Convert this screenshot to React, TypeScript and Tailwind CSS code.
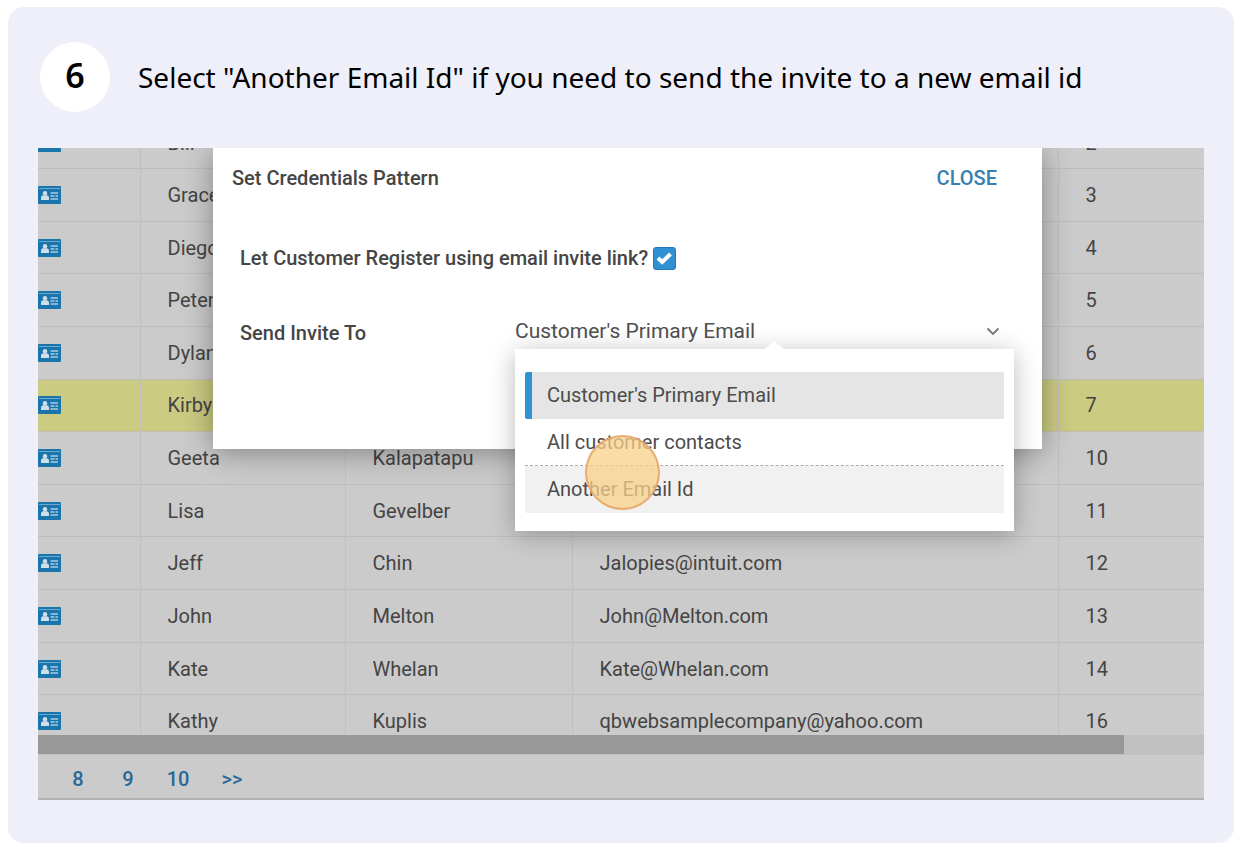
import { useState } from "react";

type Contact = { first: string; last?: string; email?: string; no: number; active?: boolean };

const contacts: Contact[] = [
  { first: "Bill", no: 2 },
  { first: "Grace", no: 3 },
  { first: "Diego", no: 4 },
  { first: "Peter", no: 5 },
  { first: "Dylan", no: 6 },
  { first: "Kirby", no: 7, active: true },
  { first: "Geeta", last: "Kalapatapu", no: 10 },
  { first: "Lisa", last: "Gevelber", no: 11 },
  { first: "Jeff", last: "Chin", email: "Jalopies@intuit.com", no: 12 },
  { first: "John", last: "Melton", email: "John@Melton.com", no: 13 },
  { first: "Kate", last: "Whelan", email: "Kate@Whelan.com", no: 14 },
  { first: "Kathy", last: "Kuplis", email: "qbwebsamplecompany@yahoo.com", no: 16 },
];

const options = ["Customer's Primary Email", "All customer contacts", "Another Email Id"];

function CardIcon() {
  return (
    <svg width="23" height="18" viewBox="0 0 23 18" aria-hidden="true" className="block">
      <rect width="23" height="18" rx="1" fill="#1a75ad" />
      <rect x="1" y="2" width="21" height="1" fill="#6fa8ca" />
      <circle cx="7" cy="7.200" r="2.200" fill="#cfe0ea" />
      <path d="M3 14v-2q0-2.500 2-2.800h4q2 .3 2 2.800v2z" fill="#cfe0ea" />
      <path d="M12.500 7H20M12.500 10h4M17.500 10H20M12.500 13H20" stroke="#a9cbe0" strokeWidth="1.400" />
    </svg>
  );
}

function ContactTable() {
  return (
    <div className="h-[587px] overflow-hidden">
      <table className="-mt-[31px] h-[631px] w-full table-fixed border-collapse text-left text-[20px] leading-6 text-[#444]">
        <colgroup>
          <col className="w-[102px]" />
          <col className="w-[205px]" />
          <col className="w-[227px]" />
          <col />
          <col className="w-[146px]" />
        </colgroup>
        <tbody>
          {contacts.map((c) => (
            <tr key={c.no} className={c.active ? "border-b border-[#c0c0b0] bg-[#cccb82]" : "border-b border-[#bdbdbd]"}>
              <td className="border-r border-[#c0c0c0]">
                <button type="button" aria-label={`Open card of ${c.first}`} className="block">
                  <CardIcon />
                </button>
              </td>
              <td className="border-r border-[#c0c0c0] pl-[27px]">{c.first}</td>
              <td className="border-r border-[#c0c0c0] pl-[27px]">{c.last}</td>
              <td className="border-r border-[#c0c0c0] pl-[27px]">{c.email}</td>
              <td className="pl-[27px]">{c.no}</td>
            </tr>
          ))}
        </tbody>
      </table>
    </div>
  );
}

function InviteMenu({ value, onPick }: { value: string; onPick: (v: string) => void }) {
  return (
    <div className="absolute top-full right-0 left-0 bg-white px-[10px] pt-[23px] pb-[18px] shadow-[0_4px_24px_rgba(0,0,0,0.28)]">
      <svg width="22" height="9" viewBox="0 0 22 9" aria-hidden="true" className="absolute -top-2 left-[248px]">
        <path d="M0 9 11 0l11 9z" fill="#fff" />
      </svg>
      <ul className="text-[20px] leading-6 text-[#4c4c4c]">
        {options.map((o, i) => (
          <li key={o} className={i === 2 ? "border-t border-dashed border-[#aaa]" : ""}>
            <button
              type="button"
              onClick={() => onPick(o)}
              className={
                o === value
                  ? "block h-[47px] w-full rounded-xs border-l-[7px] border-[#2f94d4] bg-[#e5e5e5] pb-px pl-[15px] text-left"
                  : i === 2
                    ? "block h-[47px] w-full rounded-xs bg-[#f1f1f1] pb-px pl-[22px] text-left"
                    : "block h-[46px] w-full pl-[22px] text-left"
              }
            >
              {o}
            </button>
          </li>
        ))}
      </ul>
      <span
        aria-hidden="true"
        className="pointer-events-none absolute top-[86px] left-[70px] size-[75px] rounded-full border-2 border-[#e5a065]/80 bg-[#f8d08a]/75"
      />
    </div>
  );
}

function CredentialsDialog() {
  const [value, setValue] = useState(options[0]);
  return (
    <div
      role="dialog"
      aria-labelledby="dialog-title"
      className="absolute top-0 right-[162px] left-[175px] h-[301px] bg-white text-[20px] leading-6 text-[#454545] shadow-[0_4px_28px_rgba(0,0,0,0.35)]"
    >
      <div className="flex items-center justify-between pt-[18px] pr-[45px] pl-[19px]">
        <h2 id="dialog-title" className="font-medium">Set Credentials Pattern</h2>
        <button type="button" className="font-medium text-[#3580b0]">CLOSE</button>
      </div>
      <div className="flex items-center gap-1 pt-14 pl-[27px]">
        <label htmlFor="invite-link" className="font-medium">Let Customer Register using email invite link?</label>
        <span className="grid size-6 place-items-center">
          <input
            id="invite-link"
            type="checkbox"
            defaultChecked
            className="peer col-start-1 row-start-1 size-[23px] appearance-none rounded-[3px] border border-[#2578b4] bg-[#3190d3]"
          />
          <svg width="17" height="14" viewBox="0 0 17 14" aria-hidden="true" className="pointer-events-none invisible col-start-1 row-start-1 peer-checked:visible">
            <path d="M2 7 6.200 11 14.500 3" fill="none" stroke="#fff" strokeWidth="4" />
          </svg>
        </span>
      </div>
      <div className="flex items-start pt-[43px] pr-7 pl-[27px]">
        <label htmlFor="send-to" className="w-[275px] pt-2 font-medium">Send Invite To</label>
        <div className="relative grid flex-1 items-center">
          <select
            id="send-to"
            value={value}
            onChange={(e) => setValue(e.target.value)}
            className="col-start-1 row-start-1 h-9 w-full appearance-none bg-transparent text-[21px] text-[#505050] outline-none"
          >
            {options.map((o) => (
              <option key={o}>{o}</option>
            ))}
          </select>
          <svg width="14" height="9" viewBox="0 0 14 9" aria-hidden="true" className="pointer-events-none col-start-1 row-start-1 mr-[14px] justify-self-end">
            <path d="M1.500 1.500 7 7l5.500-5.500" fill="none" stroke="#777" strokeWidth="1.800" />
          </svg>
          <InviteMenu value={value} onPick={setValue} />
        </div>
      </div>
    </div>
  );
}

export default function App() {
  return (
    <main className="min-h-screen bg-white pt-[7px] pr-4 pb-1 pl-2 font-['Noto_Sans',sans-serif] text-black">
      <section className="rounded-2xl bg-[#efeff9] px-[30px] pb-[43px]">
        <header className="flex h-[141px] items-center gap-7 pb-[2px] pl-[2px]">
          <span className="grid size-[70px] place-items-center rounded-full bg-white pb-1 text-[34px] leading-8 font-semibold">6</span>
          <h1 className="text-[28px] leading-9">Select "Another Email Id" if you need to send the invite to a new email id</h1>
        </header>
        <div className="relative overflow-hidden border-b-2 border-[#b2b2b2] bg-[#cbcbcb] font-[Roboto,sans-serif]">
          <ContactTable />
          <div className="h-5 bg-[#c0c0c0] pr-20">
            <div className="h-[19px] bg-[#989898]" />
          </div>
          <nav aria-label="Pages" className="flex h-[43px] items-center pt-1 pl-[15px] text-[20px] leading-6 font-medium text-[#286798]">
            <a href="#8" className="w-[50px] text-center">8</a>
            <a href="#9" className="w-[50px] text-center">9</a>
            <a href="#10" className="w-[50px] text-center">10</a>
            <a href="#last" className="w-[58px] text-center">&gt;&gt;</a>
          </nav>
          <CredentialsDialog />
        </div>
      </section>
    </main>
  );
}
